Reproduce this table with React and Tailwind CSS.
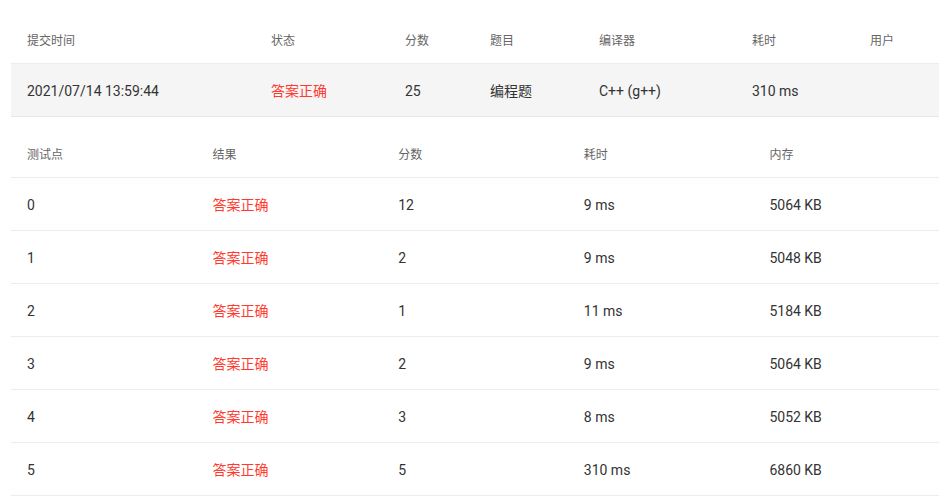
import React from "react";

const font = { fontFamily: 'Roboto, "Noto Sans CJK SC", sans-serif' };

const cols1 = ["w-[244px]", "w-[134px]", "w-[85px]", "w-[109px]", "w-[153px]", "w-[118px]", "flex-1"];
const head1 = ["提交时间", "状态", "分数", "题目", "编译器", "耗时", "用户"];

const rows = [
  ["0", "12", "9 ms", "5064 KB"],
  ["1", "2", "9 ms", "5048 KB"],
  ["2", "1", "11 ms", "5184 KB"],
  ["3", "2", "9 ms", "5064 KB"],
  ["4", "3", "8 ms", "5052 KB"],
  ["5", "5", "310 ms", "6860 KB"],
];

export default function App() {
  return (
    <div className="w-[951px] h-[501px] bg-white overflow-hidden" style={font}>
      <div className="ml-[11px] w-[928px] pt-[17px]">
        {/* Submission table */}
        <div className="flex h-[46px] items-center pt-[2px] text-[12px] text-[#666]">
          {head1.map((h, i) => (
            <div key={i} className={`${cols1[i]} pl-[16px]`}>{h}</div>
          ))}
        </div>
        <div className="flex h-[54px] items-center pt-[2px] bg-[#f5f5f5] border-t border-b border-t-[#ececec] border-b-[#e6e6e6] text-[14px] text-[#333]">
          <div className={`${cols1[0]} pl-[16px]`}>2021/07/14 13:59:44</div>
          <div className={`${cols1[1]} pl-[16px] text-[#ff3b30]`}>答案正确</div>
          <div className={`${cols1[2]} pl-[16px]`}>25</div>
          <div className={`${cols1[3]} pl-[16px]`}>编程题</div>
          <div className={`${cols1[4]} pl-[16px]`}>C++ (g++)</div>
          <div className={`${cols1[5]} pl-[16px]`}>310 ms</div>
          <div className={`${cols1[6]} pl-[16px]`}></div>
        </div>

        {/* Test case table */}
        <div className="mt-[13px]">
          <div className="grid grid-cols-5 h-[48px] items-center pt-[2px] border-b border-[#ececec] text-[12px] text-[#666]">
            {["测试点", "结果", "分数", "耗时", "内存"].map((h, i) => (
              <div key={i} className="pl-[16px]">{h}</div>
            ))}
          </div>
          {rows.map((r, i) => (
            <div key={i} className="grid grid-cols-5 h-[53px] items-center pt-[2px] border-b border-[#ececec] text-[14px] text-[#333]">
              <div className="pl-[16px]">{r[0]}</div>
              <div className="pl-[16px] text-[#ff3b30]">答案正确</div>
              <div className="pl-[16px]">{r[1]}</div>
              <div className="pl-[16px]">{r[2]}</div>
              <div className="pl-[16px]">{r[3]}</div>
            </div>
          ))}
        </div>
      </div>
    </div>
  );
}
